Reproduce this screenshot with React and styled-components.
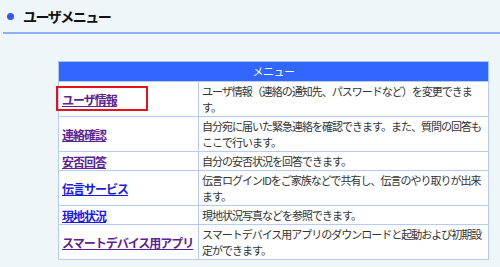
import React from 'react';
import styled, {createGlobalStyle} from "styled-components";

const GlobalStyle = createGlobalStyle`
  html, body {
    margin: 0;
    padding: 0;
    background-color: #eef6fa;
  }
  body {
    font-family: "Noto Sans CJK JP", "Noto Sans", sans-serif;
    color: #333;
  }
`;

const Page = styled.div`
  width: 500px;
  height: 267px;
  overflow: hidden;
  background-color: #eef6fa;
`;

const TitleBar = styled.div`
  display: flex;
  align-items: center;
  gap: 9px;
  height: 32px;
  margin-left: 3px;
  padding-left: 4px;
  border-bottom: 2px solid #8fb0fb;
`;

const Dot = styled.span`
  width: 7px;
  height: 7px;
  border-radius: 50%;
  background-color: #3358f0;
  margin-top: 1px;
`;

const Title = styled.h2`
  margin: 0;
  font-size: 14px;
  font-weight: 700;
  letter-spacing: -1.5px;
  color: #111;
  line-height: 1;
`;

const TableWrap = styled.div`
  padding: 27px 0 0 58px;
`;

const MenuTable = styled.table`
  width: 431px;
  border-collapse: collapse;
  border: 1px solid #a8c4f2;
  background-color: #fff;
  table-layout: fixed;
`;

const NameCol = styled.col`
  width: 140px;
`;

const HeadCell = styled.th`
  height: 19px;
  padding: 0;
  background-color: #3366ff;
  color: #fff;
  font-size: 11px;
  font-weight: 400;
  letter-spacing: -0.5px;
  text-align: center;
  line-height: 19px;
`;

const NameCell = styled.td`
  position: relative;
  padding: 1px 3px;
  border: 1px solid #b6cdf3;
  vertical-align: middle;
  line-height: 15px;
`;

const DescCell = styled.td`
  padding: 1px 3px;
  border: 1px solid #b6cdf3;
  font-size: 11px;
  letter-spacing: -1px;
  line-height: 16px;
  color: #333;
  vertical-align: middle;
`;

const MenuLink = styled.a`
  font-size: 12px;
  font-weight: 700;
  letter-spacing: -1px;
  text-decoration: underline;
  color: ${p => p.$visited ? '#5b2590' : '#1a1ae6'};
  cursor: pointer;
`;

const Highlight = styled.span`
  position: absolute;
  left: -3px;
  top: 4px;
  width: 92px;
  height: 25px;
  box-sizing: border-box;
  border: 2px solid #e8101a;
  pointer-events: none;
`;

const items = [
    {name: 'ユーザ情報', visited: true, marked: true, desc: 'ユーザ情報（連絡の通知先、パスワードなど）を変更できます。'},
    {name: '連絡確認', visited: true, desc: '自分宛に届いた緊急連絡を確認できます。また、質問の回答もここで行います。'},
    {name: '安否回答', visited: true, desc: '自分の安否状況を回答できます。'},
    {name: '伝言サービス', visited: false, desc: '伝言ログインIDをご家族などで共有し、伝言のやり取りが出来ます。'},
    {name: '現地状況', visited: false, desc: '現地状況写真などを参照できます。'},
    {name: 'スマートデバイス用アプリ', visited: true, desc: 'スマートデバイス用アプリのダウンロードと起動および初期設定ができます。'},
];

const App = () => {
    return (
        <Page>
            <GlobalStyle/>
            <TitleBar>
                <Dot/>
                <Title>ユーザメニュー</Title>
            </TitleBar>
            <TableWrap>
                <MenuTable>
                    <colgroup>
                        <NameCol/>
                        <col/>
                    </colgroup>
                    <thead>
                    <tr>
                        <HeadCell colSpan={2}>メニュー</HeadCell>
                    </tr>
                    </thead>
                    <tbody>
                    {items.map(item => (
                        <tr key={item.name}>
                            <NameCell>
                                <MenuLink $visited={item.visited}>{item.name}</MenuLink>
                                {item.marked && <Highlight/>}
                            </NameCell>
                            <DescCell>{item.desc}</DescCell>
                        </tr>
                    ))}
                    </tbody>
                </MenuTable>
            </TableWrap>
        </Page>
    )
};

export default App;
